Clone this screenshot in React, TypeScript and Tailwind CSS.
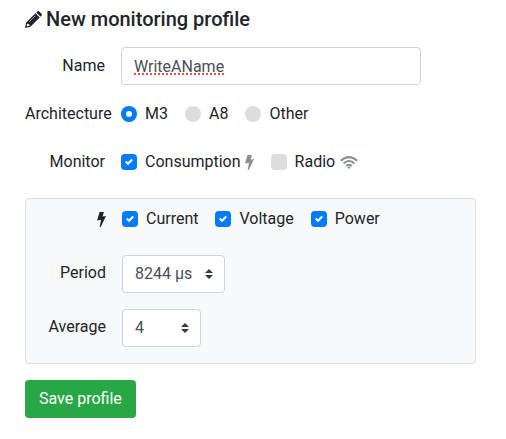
import type { ReactNode } from 'react';

function Pencil() {
  return (
    <svg className="size-[17px] shrink-0" viewBox="0 0 17 17" fill="#212529" aria-hidden="true">
      <path d="M11.3 1.5 12.3.5Q13.3-.3 14.3.5L16.5 2.7Q17.2 3.7 16.5 4.7L15.5 5.7ZM10.5 2.3 14.7 6.5 5.4 15.8 0 17 1.2 11.6Z" />
      <path d="m4 11 6.2-6.2" fill="none" stroke="#adb5bd" strokeWidth=".8" />
      <path d="m2.2 12.4-.7 3.1 3.1-.7-.4-1.5-1.4-.2Z" fill="#fff" />
      <path d="m1.4 14.2 1.4 1.4-1.8.4Z" />
    </svg>
  );
}

function Bolt({ className }: { className: string }) {
  return (
    <svg className={className} viewBox="0 0 9 15" fill="currentColor" aria-hidden="true">
      <path d="M2.6 0H6.9L5.6 4.6 9 4 3.7 15H2.7L4 7.8 0 8.6Z" />
    </svg>
  );
}

function Wifi() {
  return (
    <svg className="ml-[5px] h-[13px] w-[18px] shrink-0 text-[#868e96]" viewBox="0 0 18 13" fill="none" stroke="currentColor" strokeWidth="2" aria-hidden="true">
      <path d="M.8 4.8Q9-2.6 17.2 4.8M3.5 7.4Q9 2.6 14.5 7.4M6.1 9.9Q9 7.5 11.9 9.9" />
      <path d="m9 13-1.9-1.9q1.9-1.3 3.8 0Z" fill="currentColor" stroke="none" />
    </svg>
  );
}

function Check({ label, checked, children }: { label: string; checked?: boolean; children?: ReactNode }) {
  return (
    <label className="flex items-center whitespace-nowrap">
      <span className="mr-2 grid shrink-0 place-items-center">
        <input
          type="checkbox"
          defaultChecked={checked}
          className="peer col-start-1 row-start-1 size-4 appearance-none rounded bg-[#ddd] checked:bg-[#007bff]"
        />
        <svg className="pointer-events-none col-start-1 row-start-1 hidden size-2 peer-checked:block" viewBox="0 0 8 8" fill="#fff" aria-hidden="true">
          <path d="M6.564.75l-3.59 3.612-1.538-1.55L0 4.26 2.974 7.25 8 2.193z" />
        </svg>
      </span>
      {label}
      {children}
    </label>
  );
}

function Radio({ label, checked }: { label: string; checked?: boolean }) {
  return (
    <label className="flex items-center whitespace-nowrap">
      <span className="mr-2 grid shrink-0 place-items-center">
        <input
          type="radio"
          name="architecture"
          defaultChecked={checked}
          className="peer col-start-1 row-start-1 size-4 appearance-none rounded-full bg-[#ddd] checked:bg-[#007bff]"
        />
        <span className="pointer-events-none col-start-1 row-start-1 hidden size-1.5 rounded-full bg-white peer-checked:block" />
      </span>
      {label}
    </label>
  );
}

function Select({ id, options, width }: { id: string; options: string[]; width: string }) {
  return (
    <div className={`grid items-center ${width}`}>
      <select
        id={id}
        className="col-start-1 row-start-1 h-[38px] w-full appearance-none rounded border border-[#ced4da] bg-white pl-3 text-[#495057]"
      >
        {options.map((option) => (
          <option key={option}>{option}</option>
        ))}
      </select>
      <svg className="pointer-events-none col-start-1 row-start-1 mr-3 h-[10px] w-2 justify-self-end" viewBox="0 0 8 10" fill="#343a40" aria-hidden="true">
        <path d="M4 0 0 4h8zM4 10 0 6h8z" />
      </svg>
    </div>
  );
}

const labelClass = 'mr-4 w-20 shrink-0 whitespace-nowrap text-right';
const choicesClass = 'flex items-center gap-[17px]';

export default function App() {
  return (
    <form className="bg-white pt-[7px] pr-[30px] pb-5 pl-[25px] font-['Roboto',sans-serif] text-base leading-6 text-[#212529]">
      <h1 className="mb-4 flex items-center gap-1 text-xl leading-6 font-medium">
        <Pencil />
        New monitoring profile
      </h1>

      <div className="flex items-center">
        <label htmlFor="name" className={labelClass}>Name</label>
        <input
          id="name"
          defaultValue="WriteAName"
          spellCheck={false}
          className="h-[38px] w-[300px] min-w-0 rounded border border-[#ced4da] bg-white px-3 text-[#495057] underline decoration-[#ff4b3e] decoration-dotted decoration-2 underline-offset-2"
        />
      </div>

      <div role="radiogroup" aria-labelledby="architecture" className="mt-[17px] flex items-center">
        <span id="architecture" className={labelClass}>Architecture</span>
        <div className={choicesClass}>
          <Radio label="M3" checked />
          <Radio label="A8" />
          <Radio label="Other" />
        </div>
      </div>

      <div role="group" aria-labelledby="monitor" className="mt-6 flex items-center">
        <span id="monitor" className={labelClass}>Monitor</span>
        <div className={choicesClass}>
          <Check label="Consumption" checked>
            <Bolt className="ml-1 h-[15px] w-[9px] shrink-0 text-[#868e96]" />
          </Check>
          <Check label="Radio">
            <Wifi />
          </Check>
        </div>
      </div>

      <fieldset className="mt-6 rounded border border-[#dfdfdf] bg-[#f8f9fa] pt-2 pb-4">
        <div className="flex items-center">
          <span className="mr-4 flex w-20 shrink-0 justify-end">
            <Bolt className="h-[15px] w-[9px]" />
          </span>
          <div className={choicesClass}>
            <Check label="Current" checked />
            <Check label="Voltage" checked />
            <Check label="Power" checked />
          </div>
        </div>
        <div className="mt-6 flex items-start">
          <label htmlFor="period" className={`${labelClass} pt-1.5`}>Period</label>
          <Select id="period" options={['8244 µs', '4156 µs', '2116 µs']} width="w-[103px]" />
        </div>
        <div className="mt-4 flex items-start">
          <label htmlFor="average" className={`${labelClass} pt-1.5`}>Average</label>
          <Select id="average" options={['4', '16', '64']} width="w-[79px]" />
        </div>
      </fieldset>

      <button type="button" className="mt-4 h-[38px] rounded bg-[#28a745] px-3.5 text-white">Save profile</button>
    </form>
  );
}
